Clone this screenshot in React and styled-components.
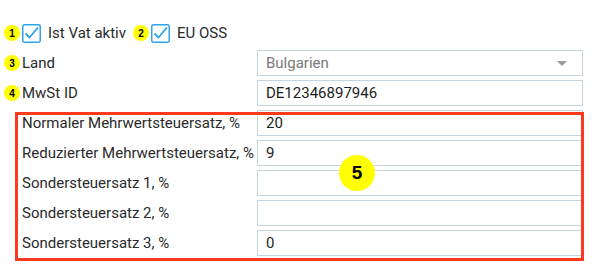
import styled, { createGlobalStyle } from 'styled-components'

const GlobalStyle = createGlobalStyle`
  html, body {
    margin: 0;
    background: #fff;
  }
  body {
    font-family: Roboto, "Liberation Sans", sans-serif;
    font-size: 15px;
    color: #2a2a2a;
    min-height: 267px;
  }
`

const rates = [
  { label: 'Normaler Mehrwertsteuersatz, %', value: '20' },
  { label: 'Reduzierter Mehrwertsteuersatz, %', value: '9' },
  { label: 'Sondersteuersatz 1, %', value: '' },
  { label: 'Sondersteuersatz 2, %', value: '' },
  { label: 'Sondersteuersatz 3, %', value: '0' },
]

function CheckIcon() {
  return (
    <svg width="19" height="19" viewBox="0 0 19 19">
      <rect x="0.75" y="0.75" width="17.5" height="17.5" rx="2" fill="none" stroke="#2fa4e7" strokeWidth="1.5" />
      <path d="M3.5 9.5 L7.5 13.5 L16 3.5" fill="none" stroke="#2fa4e7" strokeWidth="1.8" />
    </svg>
  )
}

function App() {
  return (
    <>
      <GlobalStyle />
      <Form>
        <CheckRow>
          <Badge>1</Badge>
          <CheckField>
            <CheckIcon />
            Ist Vat aktiv
          </CheckField>
          <Badge $gap>2</Badge>
          <CheckField>
            <CheckIcon />
            EU OSS
          </CheckField>
        </CheckRow>
        <Row>
          <Badge>3</Badge>
          <Label>Land</Label>
          <Select>
            Bulgarien
            <Arrow />
          </Select>
        </Row>
        <Row>
          <Badge>4</Badge>
          <Label>MwSt ID</Label>
          <Input>DE12346897946</Input>
        </Row>
        <Marked>
          {rates.map((r) => (
            <Row key={r.label}>
              <span />
              <Label>{r.label}</Label>
              <Input>{r.value}</Input>
            </Row>
          ))}
          <BigBadge>5</BigBadge>
        </Marked>
      </Form>
    </>
  )
}

const Form = styled.div`
  display: grid;
  row-gap: 4px;
  width: 579px;
  padding: 20px 0 11px 4px;
`

const Row = styled.div`
  display: grid;
  grid-template-columns: 18px 235px 326px;
  align-items: center;
  height: 26px;
`

const CheckRow = styled.div`
  display: flex;
  align-items: center;
  height: 26px;
`

const CheckField = styled.label`
  display: flex;
  align-items: center;
  gap: 7px;
  margin-left: 1px;
  svg {
    display: block;
  }
`

const Badge = styled.span`
  display: flex;
  align-items: center;
  justify-content: center;
  width: 16px;
  height: 16px;
  margin-right: 1px;
  margin-left: ${(p) => (p.$gap ? '7px' : '0')};
  border-radius: 50%;
  background: #ffff00;
  color: #000;
  font-family: "Liberation Sans", Arial, sans-serif;
  font-weight: bold;
  font-size: 10px;
`

const Label = styled.span`
  white-space: nowrap;
`

const Input = styled.div`
  box-sizing: border-box;
  height: 26px;
  padding: 0 8px;
  border: 1px solid #c4d5de;
  display: flex;
  align-items: center;
  color: #1e1e1e;
`

const Select = styled(Input)`
  justify-content: space-between;
  color: #7a7a7a;
`

const Arrow = styled.span`
  width: 0;
  height: 0;
  margin-right: 7px;
  border-left: 5px solid transparent;
  border-right: 5px solid transparent;
  border-top: 5px solid #9a9a9a;
`

const Marked = styled.div`
  position: relative;
  display: grid;
  row-gap: 4px;

  &::after {
    content: '';
    position: absolute;
    top: 2px;
    left: 11px;
    right: -1px;
    bottom: -5px;
    border: 3px solid #fb3b1c;
    pointer-events: none;
  }
`

const BigBadge = styled.span`
  position: absolute;
  left: 335px;
  top: 45px;
  width: 36px;
  height: 36px;
  border-radius: 50%;
  background: #ffff00;
  display: flex;
  align-items: center;
  justify-content: center;
  color: #000;
  font-family: "Liberation Sans", Arial, sans-serif;
  font-weight: bold;
  font-size: 19px;
`

export default App
